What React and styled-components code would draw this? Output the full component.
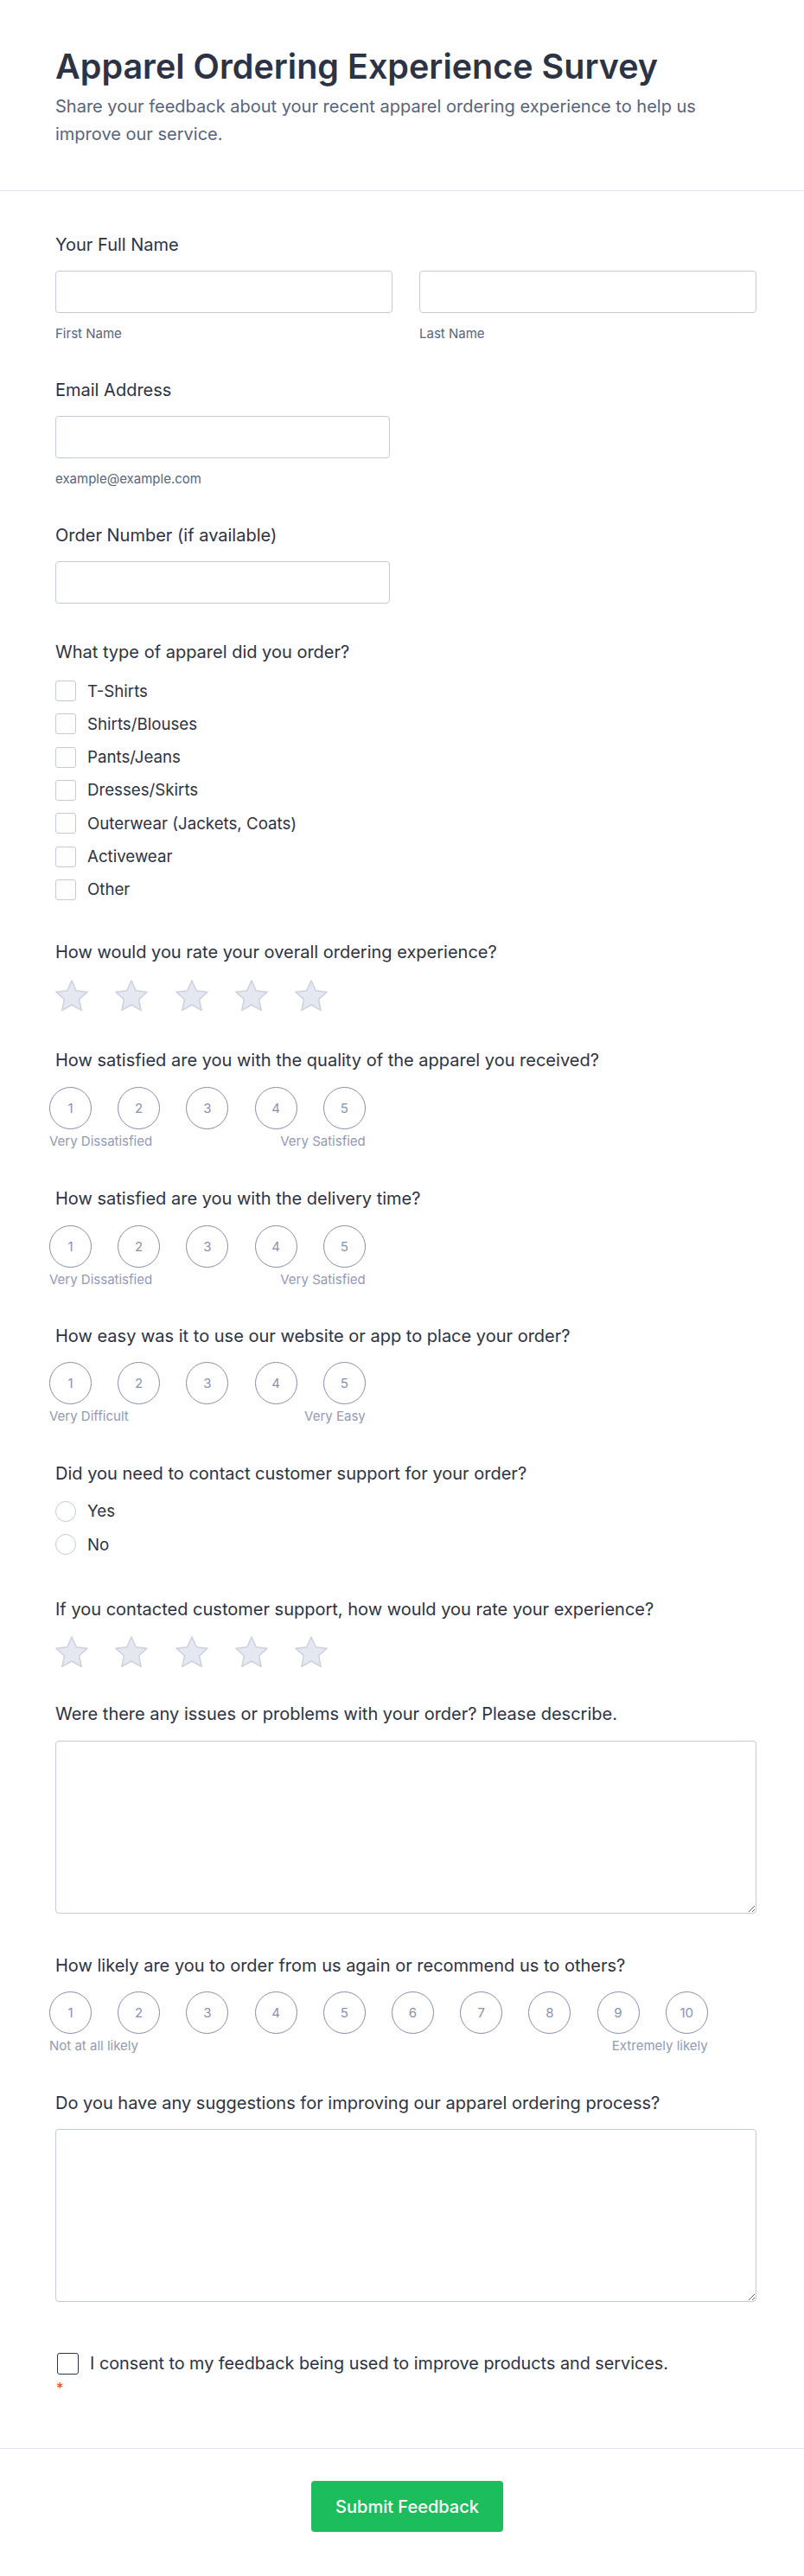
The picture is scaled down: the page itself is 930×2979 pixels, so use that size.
import React from "react";
import styled, { createGlobalStyle } from "styled-components";

const GlobalStyle = createGlobalStyle`
  * { box-sizing: border-box; }
  html, body { margin: 0; padding: 0; background: #ffffff; }
  body {
    font-family: Inter, "Noto Sans", "Liberation Sans", sans-serif;
    color: #2c3345;
  }
`;

const Page = styled.div`
  width: 930px;
  background: #ffffff;
`;

const Header = styled.header`
  padding: 53px 55px 49px 64px;
  border-bottom: 1px solid #e3e5f5;
`;

const Title = styled.h1`
  margin: 0;
  font-size: 39.5px;
  line-height: 48px;
  font-weight: 600;
  color: #2c3345;
`;

const Subtitle = styled.p`
  margin: 6px 0 0;
  font-size: 20px;
  line-height: 32px;
  color: #57647e;
`;

const FormBody = styled.form`
  display: flex;
  flex-direction: column;
  padding: 49px 55px 61px 64px;
  border-bottom: 1px solid #e3e5f5;
`;

const Field = styled.div`
  display: flex;
  flex-direction: column;
  margin-bottom: ${(p) => (p.$after ?? 42)}px;
`;

const Label = styled.label`
  font-size: 20px;
  line-height: 27px;
  font-weight: 400;
  color: #2c3345;
  margin-bottom: 16px;
`;

const NameRow = styled.div`
  display: grid;
  grid-template-columns: 1fr 1fr;
  column-gap: 31px;
`;

const InputCol = styled.div`
  display: flex;
  flex-direction: column;
  width: ${(p) => p.$width || "auto"};
`;

const TextInput = styled.input`
  height: 49px;
  width: 100%;
  border: 1px solid #c3cad8;
  border-radius: 4px;
  background: #ffffff;
  font: inherit;
  padding: 0 12px;
  outline: none;
`;

const SubLabel = styled.span`
  margin-top: 14px;
  font-size: 15px;
  line-height: 20px;
  color: #57647e;
`;

const OptionList = styled.div`
  display: flex;
  flex-direction: column;
  gap: 14.33px;
  margin-top: ${(p) => p.$top || 0}px;
`;

const OptionRow = styled.label`
  display: flex;
  align-items: center;
  gap: 13px;
  height: 24px;
  font-size: 18.7px;
  color: #2c3345;
`;

const CheckBox = styled.span`
  flex: none;
  width: 24px;
  height: 24px;
  border: 1px solid #c3cad8;
  border-radius: 3px;
  background: #ffffff;
`;

const RadioDot = styled.span`
  flex: none;
  width: 24px;
  height: 24px;
  border: 1px solid #c3cad8;
  border-radius: 50%;
  background: #ffffff;
`;

const StarRow = styled.div`
  display: flex;
  gap: 31.3px;
  margin-top: ${(p) => p.$top || 0}px;
`;

const StarIcon = styled.svg`
  display: block;
  width: 38px;
  height: 37px;
  flex: none;
`;

const Scale = styled.div`
  display: inline-flex;
  flex-direction: column;
  align-self: flex-start;
  margin-left: -7px;
  margin-top: ${(p) => p.$top || 0}px;
`;

const CircleRow = styled.div`
  display: flex;
  gap: 30.2px;
`;

const Circle = styled.span`
  width: 49px;
  height: 49px;
  border: 1px solid #878dab;
  border-radius: 50%;
  display: flex;
  align-items: center;
  justify-content: center;
  font-size: 15px;
  color: #8a91b0;
  background: #ffffff;
`;

const ScaleLabels = styled.div`
  display: flex;
  justify-content: space-between;
  margin-top: 4px;
  font-size: 15px;
  line-height: 20px;
  color: #939ab5;
`;

const TextArea = styled.textarea`
  display: block;
  width: 100%;
  height: 200px;
  margin-top: ${(p) => p.$top || 0}px;
  border: 1px solid #c3cad8;
  border-radius: 4px;
  background: #ffffff;
  font: inherit;
  resize: vertical;
  outline: none;
`;

const Consent = styled.div`
  display: flex;
  flex-direction: column;
  margin-top: 58px;
`;

const ConsentRow = styled.label`
  display: flex;
  align-items: center;
  gap: 13px;
  font-size: 19.8px;
  line-height: 27px;
  color: #2c3345;
`;

const ConsentBox = styled.span`
  flex: none;
  width: 25px;
  height: 25px;
  margin-left: 2px;
  border: 1.5px solid #2c3345;
  border-radius: 3px;
  background: #ffffff;
`;

const Required = styled.span`
  margin: 7px 0 0 1px;
  font-size: 17px;
  line-height: 16px;
  color: #f23a3c;
`;

const Footer = styled.footer`
  display: flex;
  justify-content: center;
  padding: 37px 52px 50px 64px;
`;

const SubmitButton = styled.button`
  width: 222px;
  height: 59px;
  border: none;
  border-radius: 4px;
  background: #1bbd5c;
  color: #ffffff;
  font-family: inherit;
  font-size: 20px;
  font-weight: 500;
  cursor: pointer;
`;

const STAR_POINTS =
  "19,1 24.29,12.72 37.07,14.13 27.56,22.78 30.17,35.37 19,29 7.83,35.37 10.44,22.78 0.93,14.13 13.71,12.72";

const Star = () => (
  <StarIcon viewBox="0 0 38 37" aria-hidden="true">
    <polygon
      points={STAR_POINTS}
      fill="#e5e7f1"
      stroke="#cdd1de"
      strokeWidth="1.5"
      strokeLinejoin="round"
    />
  </StarIcon>
);

const Stars = ({ top }) => (
  <StarRow $top={top}>
    {[1, 2, 3, 4, 5].map((n) => (
      <Star key={n} />
    ))}
  </StarRow>
);

const RatingScale = ({ count, low, high, top }) => (
  <Scale $top={top}>
    <CircleRow>
      {Array.from({ length: count }, (_, i) => (
        <Circle key={i}>{i + 1}</Circle>
      ))}
    </CircleRow>
    <ScaleLabels>
      <span>{low}</span>
      <span>{high}</span>
    </ScaleLabels>
  </Scale>
);

const apparel = [
  "T-Shirts",
  "Shirts/Blouses",
  "Pants/Jeans",
  "Dresses/Skirts",
  "Outerwear (Jackets, Coats)",
  "Activewear",
  "Other",
];

export default function App() {
  return (
    <Page>
      <GlobalStyle />
      <Header>
        <Title>Apparel Ordering Experience Survey</Title>
        <Subtitle>
          Share your feedback about your recent apparel ordering experience to help us improve our service.
        </Subtitle>
      </Header>

      <FormBody onSubmit={(e) => e.preventDefault()}>
        <Field>
          <Label>Your Full Name</Label>
          <NameRow>
            <InputCol>
              <TextInput type="text" />
              <SubLabel>First Name</SubLabel>
            </InputCol>
            <InputCol>
              <TextInput type="text" />
              <SubLabel>Last Name</SubLabel>
            </InputCol>
          </NameRow>
        </Field>

        <Field>
          <Label>Email Address</Label>
          <InputCol $width="387px">
            <TextInput type="email" />
            <SubLabel>example@example.com</SubLabel>
          </InputCol>
        </Field>

        <Field $after={43}>
          <Label>Order Number (if available)</Label>
          <InputCol $width="387px">
            <TextInput type="text" />
          </InputCol>
        </Field>

        <Field $after={47}>
          <Label>What type of apparel did you order?</Label>
          <OptionList $top={3}>
            {apparel.map((item) => (
              <OptionRow key={item}>
                <CheckBox />
                {item}
              </OptionRow>
            ))}
          </OptionList>
        </Field>

        <Field $after={43}>
          <Label>How would you rate your overall ordering experience?</Label>
          <Stars top={2} />
        </Field>

        <Field $after={43}>
          <Label>How satisfied are you with the quality of the apparel you received?</Label>
          <RatingScale count={5} low="Very Dissatisfied" high="Very Satisfied" top={1} />
        </Field>

        <Field $after={42}>
          <Label>How satisfied are you with the delivery time?</Label>
          <RatingScale count={5} low="Very Dissatisfied" high="Very Satisfied" top={1} />
        </Field>

        <Field $after={43}>
          <Label>How easy was it to use our website or app to place your order?</Label>
          <RatingScale count={5} low="Very Difficult" high="Very Easy" top={0} />
        </Field>

        <Field $after={50}>
          <Label>Did you need to contact customer support for your order?</Label>
          <OptionList $top={2}>
            <OptionRow>
              <RadioDot />
              Yes
            </OptionRow>
            <OptionRow>
              <RadioDot />
              No
            </OptionRow>
          </OptionList>
        </Field>

        <Field $after={40}>
          <Label>If you contacted customer support, how would you rate your experience?</Label>
          <Stars top={1} />
        </Field>

        <Field $after={47}>
          <Label>Were there any issues or problems with your order? Please describe.</Label>
          <TextArea $top={1} />
        </Field>

        <Field $after={43}>
          <Label>How likely are you to order from us again or recommend us to others?</Label>
          <RatingScale count={10} low="Not at all likely" high="Extremely likely" top={0} />
        </Field>

        <Field $after={0}>
          <Label>Do you have any suggestions for improving our apparel ordering process?</Label>
          <TextArea />
        </Field>

        <Consent>
          <ConsentRow>
            <ConsentBox />
            I consent to my feedback being used to improve products and services.
          </ConsentRow>
          <Required>*</Required>
        </Consent>
      </FormBody>

      <Footer>
        <SubmitButton type="submit">Submit Feedback</SubmitButton>
      </Footer>
    </Page>
  );
}
